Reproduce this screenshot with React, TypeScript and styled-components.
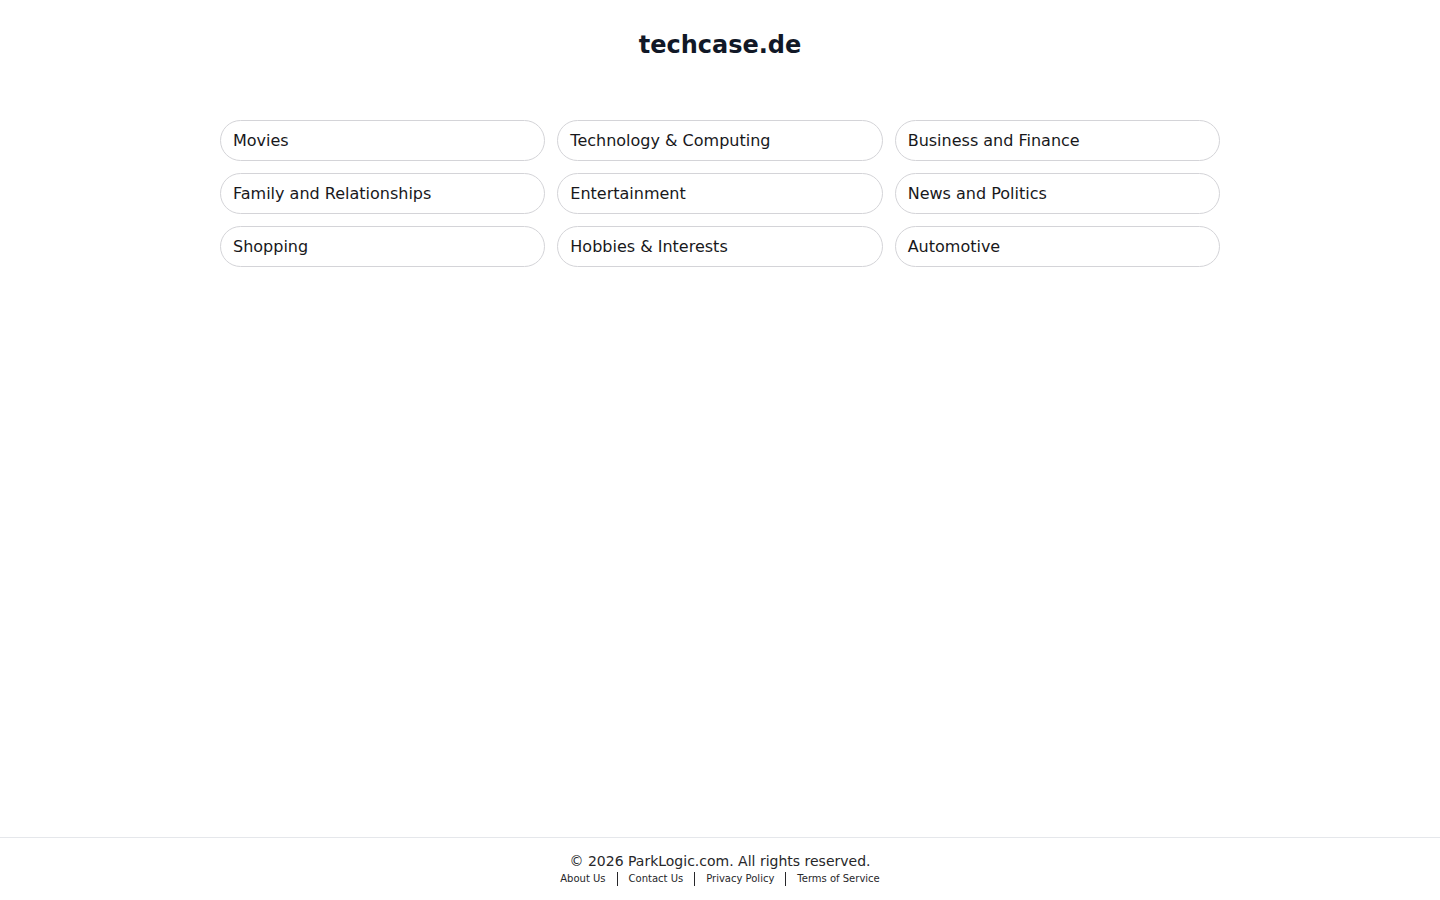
import styled, { createGlobalStyle } from "styled-components";

const GlobalStyle = createGlobalStyle`
    html, body {
        margin: 0;
        padding: 0;
        background: #ffffff;
    }
    body {
        font-family: "DejaVu Sans", "Liberation Sans", sans-serif;
        color: #111827;
    }
    * {
        box-sizing: border-box;
    }
`;

const Page = styled.div`
    display: flex;
    flex-direction: column;
    min-height: 100vh;
`;

const Main = styled.main`
    flex: 1;
    display: flex;
    flex-direction: column;
    align-items: center;
    padding-top: 29px;
`;

const Title = styled.h1`
    margin: 0;
    font-size: 24px;
    line-height: 32px;
    font-weight: 700;
    color: #111827;
`;

const Grid = styled.div`
    display: grid;
    grid-template-columns: repeat(3, 1fr);
    gap: 12px;
    width: 1000px;
    margin-top: 59px;
`;

const Category = styled.a`
    display: flex;
    align-items: center;
    height: 41px;
    padding: 0 12px;
    border: 1px solid #d4d4d8;
    border-radius: 9999px;
    font-size: 16px;
    color: #18181b;
    text-decoration: none;
    cursor: pointer;
`;

const Footer = styled.footer`
    border-top: 1px solid #e5e7eb;
    padding: 15px 0 14px;
    display: flex;
    flex-direction: column;
    align-items: center;
`;

const Copyright = styled.div`
    font-size: 14px;
    line-height: 17px;
    color: #27272a;
`;

const Links = styled.nav`
    display: flex;
    align-items: center;
    height: 16px;
    padding-top: 1px;
`;

const FooterLink = styled.a<{ $first?: boolean }>`
    font-size: 10px;
    line-height: 14px;
    color: #27272a;
    text-decoration: none;
    padding: 0 11px;
    border-left: ${p => (p.$first ? "none" : "1.5px solid #27272a")};
`;

const categories = [
    "Movies",
    "Technology & Computing",
    "Business and Finance",
    "Family and Relationships",
    "Entertainment",
    "News and Politics",
    "Shopping",
    "Hobbies & Interests",
    "Automotive",
];

const footerLinks = ["About Us", "Contact Us", "Privacy Policy", "Terms of Service"];

export default function App() {
    return (
        <Page>
            <GlobalStyle />
            <Main>
                <Title>techcase.de</Title>
                <Grid>
                    {categories.map(c => (
                        <Category key={c}>{c}</Category>
                    ))}
                </Grid>
            </Main>
            <Footer>
                <Copyright>© 2026 ParkLogic.com. All rights reserved.</Copyright>
                <Links>
                    {footerLinks.map((l, i) => (
                        <FooterLink key={l} $first={i === 0}>{l}</FooterLink>
                    ))}
                </Links>
            </Footer>
        </Page>
    );
}
